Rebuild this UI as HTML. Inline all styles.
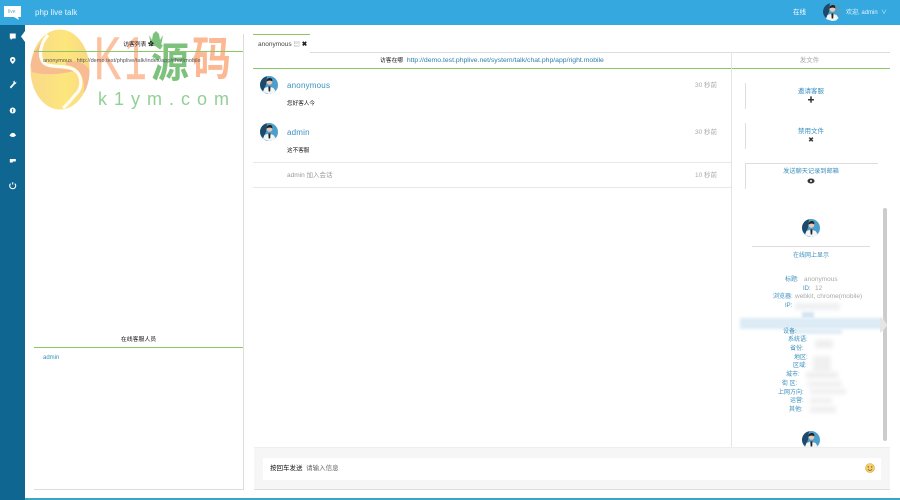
<!DOCTYPE html>
<html lang="zh">
<head>
<meta charset="utf-8">
<title>php live talk</title>
<style>
html,body{margin:0;padding:0;background:#fff}
body{width:900px;height:500px;position:relative;overflow:hidden;font-family:"Liberation Sans","Noto Sans CJK SC",sans-serif;font-size:7px;color:#222}
.a{position:absolute;white-space:nowrap;line-height:10px;margin-top:2px}
.a.w{margin-top:0}
.r{position:absolute}
.c{text-align:center}
.bl{color:#3a8fbf}
.g{color:#aaa}
</style>
</head>
<body>
<svg width="0" height="0" style="position:absolute">
<defs>
<symbol id="av" viewBox="0 0 18 18">
<circle cx="9" cy="9" r="9" fill="#4d9fcb"/>
<path d="M0 9A9 9 0 0 1 7 .2L6 9 3 15A9 9 0 0 1 0 9Z" fill="#1d4a6b"/>
<path d="M3 16 4.500 12 9 10.500 13.500 12 15.500 15 13 17.500 9 18Z" fill="#f4f5f6"/>
<circle cx="9.500" cy="6" r="2.800" fill="#e8c9b4"/>
<path d="M6.500 5.500C6.500 3 8 2 10 2S12.500 3.500 12.300 5.500C11 4.300 8.500 4.300 6.500 5.500Z" fill="#222"/>
<path d="M8.300 10.500H10.500L10.200 15.500H8.700Z" fill="#222"/>
</symbol>
<linearGradient id="eg" x1="0" y1="0" x2="1" y2="0"><stop offset="0" stop-color="#f9d98a"/><stop offset=".6" stop-color="#fde67c"/><stop offset="1" stop-color="#f9d884"/></linearGradient>
</defs>
</svg>

<!-- watermark (beneath the page content) -->
<svg class="r" style="left:30px;top:29px" width="60" height="82" viewBox="0 0 60 82">
<ellipse cx="30" cy="40.500" rx="29.500" ry="40" fill="url(#eg)"/>
<path d="M.5 36C2 26 8 16 14 10 9 22 9 31 14 36 20 41 32 38 44 42 30 46 12 46 2 43Z" fill="#f6b893" opacity=".9"/>
<path d="M36 33C45 31 55 33 59.500 41 59.500 50 58 57 54 64 55 52 52 38 36 36Z" fill="#f6b893" opacity=".9"/>
<path d="M18 6C10 15 8 28 14 34 20 39 35 36 43 40 52 45 54 58 45 66 41 71 37 76 33 79" fill="none" stroke="#fffdf2" stroke-width="3.200"/>
</svg>
<div class="a w" style="left:94px;top:29px;font-size:60px;line-height:60px;color:#fcc1a0;-webkit-text-stroke:.5px #fcc1a0;transform:scaleX(.68);transform-origin:0 0">K</div>
<div class="a w" style="left:124px;top:29px;font-size:60px;line-height:60px;color:#fcc1a0;-webkit-text-stroke:.5px #fcc1a0;transform:scaleX(.68);transform-origin:0 0">1</div>
<svg class="r" style="left:149px;top:31px" width="14" height="15" viewBox="0 0 14 15"><path d="M0 4 3 9 4 3 7 0 10 3 11 9 14 4 12 15H2Z" fill="#7cc27c"/></svg>
<div class="a w" style="left:151px;top:43px;font-size:38px;line-height:38px;color:#7cc27c;font-weight:bold;transform:scaleY(1.1);transform-origin:0 0">源</div>
<div class="a w" style="left:192px;top:37px;font-size:39px;line-height:39px;color:#fcb893;font-weight:bold;transform:scaleY(1.18);transform-origin:0 0">码</div>
<div class="a w" style="left:98px;top:88px;font-size:18px;line-height:22px;color:#92cf96;letter-spacing:7px">k1ym.com</div>

<!-- header -->
<div class="r" style="left:0;top:0;width:900px;height:25px;background:#35a8e0"></div>
<svg class="r" style="left:4px;top:6px" width="18" height="15" viewBox="0 0 18 15"><path d="M0 0H17V11H14L15 14 10 11H0Z" fill="#fff"/></svg>
<div class="a" style="left:8px;top:5px;font-size:5px;color:#6ab">live</div>
<div class="a" style="left:35px;top:6px;font-size:8px;color:#e8f5fc">php live talk</div>
<div class="a" style="left:793px;top:6px;font-size:6.500px;color:#fff">在线</div>
<svg class="r" style="left:823px;top:3px" width="18" height="18"><use href="#av"/></svg>
<div class="a" style="left:846px;top:6px;font-size:6px;color:#e3f3fb">欢迎, admin &nbsp;∨</div>

<!-- sidebar -->
<div class="r" style="left:0;top:25px;width:25px;height:475px;background:#0f6690"></div>
<svg class="r" style="left:0;top:25px" width="27" height="175" viewBox="0 0 27 175" fill="#fff">
<path d="M25 6 21 11.500 25 17Z"/>
<path d="M9.800 8.500H15.700V13.500H12.500L10.800 15V13.500H9.800Z"/>
<path d="M12.700 32C10.700 32 10 33.500 10 35 10 36.500 12.700 39 12.700 39S15.400 36.500 15.400 35C15.400 33.500 14.700 32 12.700 32ZM12.700 36A1 1 0 1 1 12.700 34 1 1 0 0 1 12.700 36Z"/>
<path d="M9.800 62 13.500 58 13.200 56.500 15 55.500 14.500 57 15.500 57.500 16.500 56.500 16 58.500 14.500 59.500 11 63.500Z"/>
<circle cx="12.700" cy="85.500" r="3"/><rect x="12.200" y="84" width="1" height="3.200" fill="#0f6690"/>
<path d="M9.500 110.500C11.500 107 14.500 107 16 110.500 14 112.500 11.500 112.500 9.500 110.500Z"/>
<rect x="9.800" y="134" width="6" height="2.500"/><rect x="9.800" y="136.500" width="3" height="1"/>
<path d="M12.700 157.200V159.500M10.600 158.600A3 3 0 1 0 14.800 158.600" fill="none" stroke="#fff" stroke-width="1.100"/>
</svg>

<!-- left panel -->
<div class="a c" style="left:34px;top:38px;width:209px;font-size:5.800px;color:#111">访客列表 ✿</div>
<div class="a" style="left:43px;top:54px;font-size:5.600px;color:#555">anonymous &nbsp;&nbsp;http://demo.test/phplive/talk/index/app/chat/mobile</div>
<div class="r" style="left:34px;top:51px;width:209px;height:1px;background:#8cc665"></div>
<div class="a c" style="left:34px;top:333px;width:209px;font-size:5.900px;color:#111">在线客服人员</div>
<div class="r" style="left:34px;top:347px;width:209px;height:1px;background:#8cc665"></div>
<div class="a bl" style="left:43px;top:351px;font-size:6px">admin</div>
<div class="r" style="left:243px;top:34px;width:1px;height:456px;background:#ddd"></div>
<div class="r" style="left:34px;top:489px;width:210px;height:1px;background:#ddd"></div>
<div class="r" style="left:25px;top:498px;width:875px;height:2px;background:#3da5c4"></div>

<!-- tabs -->
<div class="r" style="left:253px;top:34px;width:57px;height:1px;background:#8cc665"></div>
<div class="a" style="left:258px;top:38px;font-size:6.500px;color:#444">anonymous <span style="color:#999">▤</span> <b style="color:#222">✖</b></div>
<div class="r" style="left:310px;top:52px;width:580px;height:1px;background:#ddd"></div>
<div class="a" style="left:380px;top:54px;font-size:5.800px;color:#111">访客在哪 <span style="color:#2d7fae;font-size:6.850px;margin-left:2px">http://demo.test.phplive.net/system/talk/chat.php/app/right.mobile</span></div>
<div class="r" style="left:253px;top:68px;width:637px;height:1px;background:#8cc665"></div>
<div class="a c g" style="left:732px;top:54px;width:155px;font-size:6.500px">发文件</div>
<div class="r" style="left:731px;top:52px;width:1px;height:395px;background:#e4e4e4"></div>

<!-- messages -->
<svg class="r" style="left:260px;top:76px" width="18" height="18"><use href="#av"/></svg>
<div class="a bl" style="left:287px;top:79px;font-size:8px;letter-spacing:.2px">anonymous</div>
<div class="a g" style="left:695px;top:79px;font-size:6.500px">30 秒前</div>
<div class="a" style="left:287px;top:97px;font-size:5.600px;color:#111">您好客人今</div>

<svg class="r" style="left:260px;top:123px" width="18" height="18"><use href="#av"/></svg>
<div class="a bl" style="left:287px;top:126px;font-size:8px;letter-spacing:.2px">admin</div>
<div class="a g" style="left:695px;top:126px;font-size:6.500px">30 秒前</div>
<div class="a" style="left:287px;top:144px;font-size:5.600px;color:#111">这不客服</div>

<div class="r" style="left:253px;top:162px;width:478px;height:1px;background:#e8e8e8"></div>
<div class="a g" style="left:287px;top:169px;font-size:6.500px;color:#999">admin 加入会话</div>
<div class="a g" style="left:695px;top:169px;font-size:6.500px">10 秒前</div>
<div class="r" style="left:253px;top:187px;width:478px;height:1px;background:#e8e8e8"></div>

<!-- actions -->
<div class="r" style="left:745px;top:83px;width:1px;height:26px;background:#ddd"></div>
<div class="a c bl" style="left:745px;top:85px;width:132px;font-size:6.500px">邀请客服</div>
<div class="a c" style="left:745px;top:94px;width:132px;font-size:7px;font-weight:bold;color:#333">✚</div>
<div class="r" style="left:745px;top:123px;width:1px;height:26px;background:#ddd"></div>
<div class="a c bl" style="left:745px;top:125px;width:132px;font-size:6.500px">禁用文件</div>
<div class="a c" style="left:745px;top:134px;width:132px;font-size:7px;color:#333">✖</div>
<div class="r" style="left:745px;top:163px;width:133px;height:1px;background:#ddd"></div>
<div class="r" style="left:745px;top:163px;width:1px;height:26px;background:#ddd"></div>
<div class="a c bl" style="left:745px;top:165px;width:132px;font-size:6.200px">发送聊天记录到邮箱</div>
<svg class="r" style="left:807px;top:178px" width="8" height="6"><ellipse cx="4" cy="3" rx="3.500" ry="2.500" fill="#333"/><circle cx="4" cy="3" r="1" fill="#fff"/></svg>

<!-- scroll + profile -->
<div class="r" style="left:883px;top:208px;width:4px;height:233px;background:#ccc;border-radius:2px"></div>
<svg class="r" style="left:802px;top:219px" width="18" height="18"><use href="#av"/></svg>
<div class="r" style="left:752px;top:246px;width:118px;height:1px;background:#ddd"></div>
<div class="a c bl" style="left:745px;top:249px;width:132px;font-size:6px">在线网上显示</div>

<div class="a bl" style="left:785px;top:273px;font-size:6px">标题:</div><div class="a g" style="left:804px;top:273px;font-size:6.500px">anonymous</div>
<div class="a bl" style="left:803px;top:282px;font-size:6px">ID:</div><div class="a g" style="left:815px;top:282px;font-size:6.500px">12</div>
<div class="a bl" style="left:773px;top:290px;font-size:6px">浏览器:</div><div class="a g" style="left:795px;top:290px;font-size:6.500px">webkit, chrome(mobile)</div>
<div class="a bl" style="left:785px;top:299px;font-size:6px">IP:</div>
<div class="r" style="left:795px;top:303px;width:45px;height:7px;background:#eef0f2;filter:blur(2px)"></div>
<div class="r" style="left:802px;top:312px;width:12px;height:6px;background:#d5e6f2;filter:blur(1px)"></div>
<div class="r" style="left:740px;top:318px;width:143px;height:11px;background:#dcebf5;filter:blur(1.500px)"></div>
<svg class="r" style="left:880px;top:317px" width="8" height="16"><path d="M0 0 Q7 6 7 8 Q7 10 0 16Z" fill="#e5e5e5"/></svg>
<div class="r" style="left:790px;top:329px;width:52px;height:5px;background:#dfecf5;filter:blur(1.500px)"></div>
<div class="a bl" style="left:783px;top:325px;font-size:6px">设备:</div>
<div class="a bl" style="left:788px;top:333px;font-size:6px">系统语:</div>
<div class="a bl" style="left:790px;top:342px;font-size:6px">省份:</div>
<div class="a bl" style="left:794px;top:351px;font-size:6px">地区:</div>
<div class="a bl" style="left:793px;top:359px;font-size:6px">区域:</div>
<div class="a bl" style="left:786px;top:368px;font-size:6px">城市:</div>
<div class="a bl" style="left:782px;top:377px;font-size:6px">街 区:</div>
<div class="a bl" style="left:778px;top:386px;font-size:6px">上网方向:</div>
<div class="a bl" style="left:790px;top:394px;font-size:6px">运营:</div>
<div class="a bl" style="left:789px;top:403px;font-size:6px">其他:</div>
<div class="r" style="left:815px;top:340px;width:18px;height:8px;background:#eee;filter:blur(2px)"></div>
<div class="r" style="left:813px;top:356px;width:18px;height:16px;background:#f0f0f0;filter:blur(2px)"></div>
<div class="r" style="left:806px;top:372px;width:32px;height:6px;background:#eee;filter:blur(2px)"></div>
<div class="r" style="left:808px;top:381px;width:34px;height:6px;background:#f0f0f0;filter:blur(2px)"></div>
<div class="r" style="left:810px;top:389px;width:36px;height:5px;background:#eee;filter:blur(2px)"></div>
<div class="r" style="left:810px;top:398px;width:22px;height:5px;background:#eee;filter:blur(2px)"></div>
<div class="r" style="left:810px;top:406px;width:26px;height:7px;background:#f0f0f0;filter:blur(2px)"></div>
<svg class="r" style="left:802px;top:431px" width="18" height="16" viewBox="0 0 18 16"><use href="#av" width="18" height="18"/></svg>

<!-- input -->
<div class="r" style="left:254px;top:447px;width:636px;height:43px;background:#f6f6f6;border-bottom:1px solid #ddd;box-sizing:border-box;border-top:1px solid #eee"></div>
<div class="r" style="left:263px;top:458px;width:618px;height:22px;background:#fff"></div>
<div class="a" style="left:270px;top:462px;font-size:6.500px;color:#111">按回车发送 <span style="color:#666">&nbsp;请输入信息</span></div>
<svg class="r" style="left:865px;top:463px" width="10" height="10" viewBox="0 0 10 10"><circle cx="5" cy="5" r="4.500" fill="#f3cf6e" stroke="#d9a93c" stroke-width=".6"/><circle cx="3.300" cy="4" r=".7" fill="#7a5a20"/><circle cx="6.700" cy="4" r=".7" fill="#7a5a20"/><path d="M2.800 6.200Q5 8.500 7.200 6.200" stroke="#7a5a20" stroke-width=".7" fill="none"/></svg>
</body>
</html>
